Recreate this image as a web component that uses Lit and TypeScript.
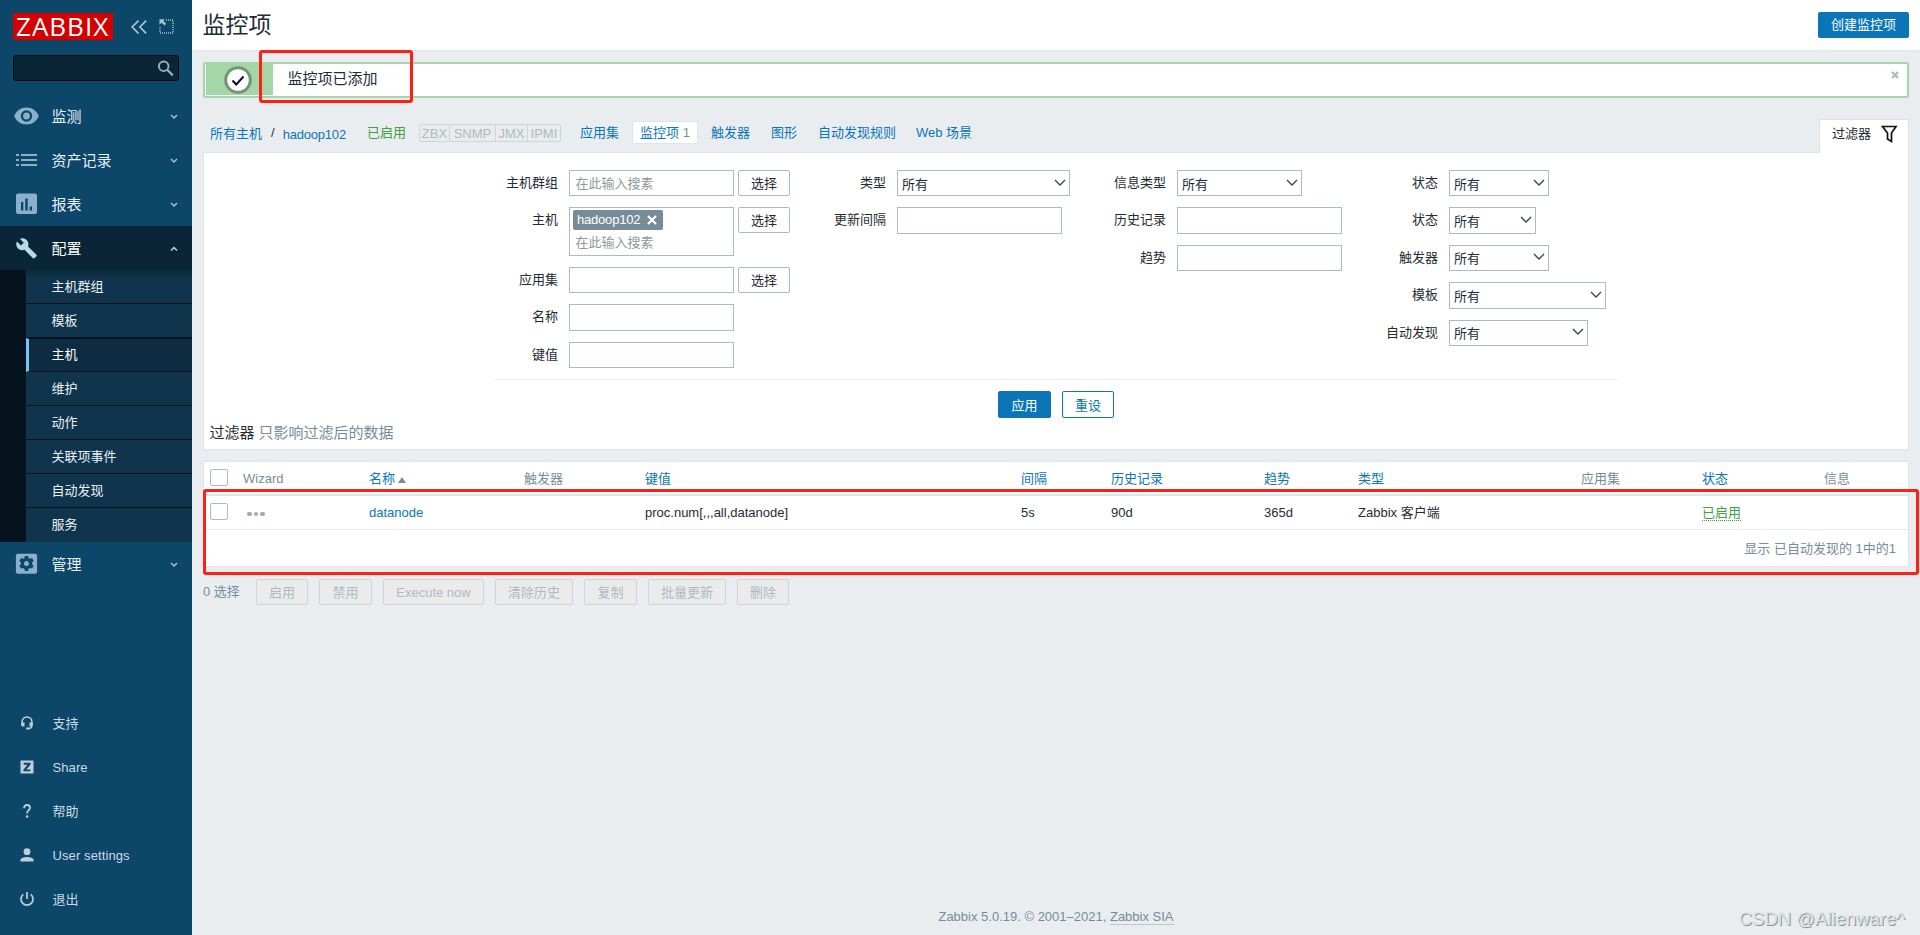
import { LitElement, html, css, svg, nothing } from "lit";
import { customElement } from "lit/decorators.js";
import { classMap } from "lit/directives/class-map.js";

const icons: Record<string, unknown> = {
  eye: svg`<svg width="26" height="20" viewBox="0 0 26 20"><path fill-rule="evenodd" d="M13.500 1.500C8 1.500 3.300 4.800 1.100 10c2.200 5.200 6.900 8.500 12.400 8.500S23.700 15.200 25.900 10C23.700 4.800 19 1.500 13.500 1.500zm0 14.200a5.700 5.700 0 1 1 0-11.400 5.700 5.700 0 0 1 0 11.400zm0-9.100a3.400 3.400 0 1 0 0 6.800 3.400 3.400 0 0 0 0-6.800z" fill="currentColor"/></svg>`,
  list: svg`<svg width="26" height="20" viewBox="0 0 26 20"><path d="M3 3h3v2H3zM3 8h3v2H3zM3 13h3v2H3zM8 3h16v2H8zM8 8h16v2H8zM8 13h16v2H8z" transform="translate(0 1)" fill="currentColor"/></svg>`,
  chart: svg`<svg width="26" height="24" viewBox="0 0 26 24"><path fill-rule="evenodd" d="M5.100 1.500h16.800c1.200 0 2.100.9 2.100 2.100v16.300c0 1.200-.9 2.100-2.100 2.100H5.100A2.100 2.100 0 0 1 3 19.900V3.600c0-1.200.9-2.100 2.100-2.100zM8 10v8.500h2.300V10zm4.300-3.500v12h2.400v-12zm4.400 8v4H19v-4z" fill="currentColor"/></svg>`,
  wrench: svg`<svg width="26" height="24" viewBox="0 0 26 24"><path d="M22.700 19l-9.100-9.100c.9-2.300.4-5-1.500-6.900-2-2-5-2.400-7.400-1.300L9 6 6 9 1.600 4.700C.4 7.100.9 10.100 2.900 12.100c1.900 1.900 4.600 2.400 6.900 1.500l9.100 9.100c.4.400 1 .4 1.400 0l2.300-2.300c.5-.4.5-1.100.1-1.400z" transform="translate(2.400 1.200) scale(.93)" fill="currentColor"/></svg>`,
  gear: svg`<svg width="26" height="24" viewBox="0 0 26 24"><path fill-rule="evenodd" transform="translate(.4 0)" d="M4.500 1.800h17.200c1.100 0 2 .9 2 2v16c0 1.100-.9 2-2 2H4.500a2 2 0 0 1-2-2v-16c0-1.100.9-2 2-2zM11.400 4l-.4 2-1.300.8-2.100-.7-1.700 2.900 1.600 1.500v1.700l-1.600 1.500 1.700 2.900 2.100-.7 1.300.8.400 2.300h3.400l.4-2.300 1.300-.8 2.100.7 1.700-2.900-1.600-1.500v-1.700l1.600-1.500-1.700-2.900-2.100.7-1.300-.8-.4-2zM13.100 8.900a2.500 2.500 0 1 1 0 5 2.500 2.500 0 0 1 0-5z" fill="currentColor"/></svg>`,
  support: svg`<svg width="14" height="14" viewBox="0 0 14 14"><path d="M2.100 9V5.800a4.900 4.900 0 0 1 9.800 0V9c0 2-.7 3.200-2.500 3.400H7.500" fill="none" stroke="currentColor" stroke-width="1.500"/><path d="M1.300 6.500h3.200v4H2.600c-.8 0-1.300-.5-1.300-1.200zM9.500 6.500h3.200v2.800c0 .7-.5 1.200-1.300 1.200H9.500zM6.200 11.500h2.600v2H6.200z" fill="currentColor"/></svg>`,
  share: svg`<svg width="14" height="14" viewBox="0 0 14 14"><path fill-rule="evenodd" d="M1 .5h12q.5 0 .5.5v12q0 .5-.5.500H1q-.5 0-.5-.5V1Q.5.500 1 .5zM3.700 2.800v1.900h3.800L3.400 9.700v1.600h7v-1.900H6.500l4-5V2.800z" fill="currentColor"/></svg>`,
  help: svg`<svg width="14" height="14" viewBox="0 0 14 14"><path d="M4 4.200C4 2.100 5.200 1 7 1s3 1 3 2.700c0 2.200-2.800 2.600-2.800 5.100v.6" fill="none" stroke="currentColor" stroke-width="1.800"/><circle cx="7.100" cy="12.500" r="1.300" fill="currentColor"/></svg>`,
  user: svg`<svg width="14" height="14" viewBox="0 0 14 14"><circle cx="7" cy="3.700" r="3.400" fill="currentColor"/><path d="M.4 13.500v-1.600C.4 9.900 4 8.900 7 8.900s6.600 1 6.600 3v1.600z" fill="currentColor"/></svg>`,
  power: svg`<svg width="14" height="14" viewBox="0 0 14 14"><path d="M3.300 2.400a6 6 0 1 0 7.400 0M7 0v7" fill="none" stroke="currentColor" stroke-width="1.700"/></svg>`,
};

const chevron = (up = false) => svg`<svg class="chev" width="8" height="6" viewBox="0 0 8 6"><path d=${up ? "M1 4.500l3-3 3 3" : "M1 1l3 3 3-3"} fill="none" stroke="currentColor" stroke-width="1.500"/></svg>`;

@customElement("zbx-sidebar")
class ZbxSidebar extends LitElement {
  static styles = css`
    :host { display: flex; flex-direction: column; width: 192px; height: 100%; background: #0c4669; color: #e8f1f7;
      font: 15px/44px "Liberation Sans", "Noto Sans CJK SC", sans-serif; box-sizing: border-box; padding-bottom: 14px; }
    .head { display: flex; height: 55px; padding: 13px 0 0 13px; box-sizing: border-box; align-items: flex-start; color: #a9c3d3; }
    .logo { box-sizing: border-box; flex: none; width: 100px; height: 27px; margin-right: 18px; padding-left: 3px; background: #d40000; color: #fff; font: 26px/27px "Open Sans", sans-serif; letter-spacing: 1px; white-space: nowrap; }
    .fold { margin: 7px 12px 0 0; }
    .compact { margin-top: 6px; }
    .search { display: flex; align-items: center; justify-content: flex-end; box-sizing: border-box; width: 166px; height: 26px; margin: 0 0 13px 13px;
      background: #0a2536; border: 1px solid #020b11; border-radius: 3px; padding-right: 4px; color: #8fb1c8; }
    .item { display: flex; align-items: center; height: 44px; padding: 0 14px 0 13px; }
    .item svg { color: #8ab0ca; flex: none; }
    .item .label { flex: 1; margin-left: 12.500px; padding-top: 2px; }
    .item .chev { color: #a5c4d8; margin-top: 2px; }
    .item.open { background: #0a2536; color: #fff; }
    .item.open svg { color: #b9d8ec; }
    .sub { background: #04131d; padding-left: 26px; font-size: 13px; }
    .sub div { box-sizing: border-box; height: 34px; line-height: 33px; padding-left: 25.500px; background: #0f344b; border-bottom: 1px solid #04131d; }
    .sub .sel { background: #0d2b41; border-left: 3px solid #7cc4f5; border-top: 1px solid #04131d; padding-left: 22.500px; line-height: 31px; color: #fff; }
    .sub div:last-child { border-bottom: 0; }
    .sub div:first-child { background: linear-gradient(#0b2a3d, #0f344b 8px); }
    .grow { flex: 1; }
    .small { font-size: 13px; display: flex; align-items: center; height: 44px; padding-left: 19.500px; color: #cbdbe5; }
    .small span { margin-left: 19px; padding-top: 2px; letter-spacing: .1px; }
    .small svg { color: #bccfd9; }
  `;
  render() {
    const main: [string, string][] = [["eye", "监测"], ["list", "资产记录"], ["chart", "报表"], ["wrench", "配置"]];
    const sub = ["主机群组", "模板", "主机", "维护", "动作", "关联项事件", "自动发现", "服务"];
    const bottom: [string, string][] = [["support", "支持"], ["share", "Share"], ["help", "帮助"], ["user", "User settings"], ["power", "退出"]];
    return html`
      <div class="head">
        <div class="logo">ZABBIX</div>
        <svg class="fold" width="16" height="14" viewBox="0 0 16 14"><path d="M7.500.7L1.200 7l6.300 6.300M15.200.7L8.900 7l6.300 6.300" fill="none" stroke="currentColor" stroke-width="1.700"/></svg>
        <svg class="compact" width="15" height="15" viewBox="0 0 15 15"><path d="M7 1h7v13H1V8" fill="none" stroke="currentColor" stroke-width="1.400" stroke-dasharray="1 1"/><path d="M.5.300h5.500L4.400 2l2.800 2.800-1.700 1.700L2.600 3.800.5 5.800z" fill="currentColor"/></svg>
      </div>
      <div class="search"><svg width="17" height="17" viewBox="0 0 17 17"><circle cx="6.700" cy="6.300" r="4.800" fill="none" stroke="currentColor" stroke-width="1.900"/><path d="M10.200 9.800l5.600 5.600" stroke="currentColor" stroke-width="2.200"/></svg></div>
      ${main.map(([i, t]) => html`<div class=${classMap({ item: true, open: i === "wrench" })}>${icons[i]}<span class="label">${t}</span>${chevron(i === "wrench")}</div>`)}
      <div class="sub">${sub.map((t) => html`<div class=${classMap({ sel: t === "主机" })}>${t}</div>`)}</div>
      <div class="item">${icons.gear}<span class="label">管理</span>${chevron()}</div>
      <div class="grow"></div>
      ${bottom.map(([i, t]) => html`<div class="small">${icons[i]}<span>${t}</span></div>`)}`;
  }
}

type Field = { label: string; kind: "select" | "input" | "picker" | "multi" | "inputpick"; width?: number };

@customElement("zbx-filter")
class ZbxFilter extends LitElement {
  static styles = css`
    :host { display: block; box-sizing: border-box; height: 298px; background: #fff; border: 1px solid #dfe4e7; padding: 17px 0 0; font-size: 13px; color: #1f2c33; }
    .cols { display: flex; width: 1122px; height: 209px; margin-left: 291px; border-bottom: 1px solid #e7eaec; align-items: flex-start; }
    .col { display: flex; flex-direction: column; gap: 11px; }
    .row { display: flex; height: 26.400px; line-height: 26px; }
    .row.tall { height: 48.330px; }
    .lab { text-align: right; margin-right: 11px; white-space: nowrap; }
    .c0 .lab { width: 63px; } .c1 .lab { width: 96px; } .c2 .lab { width: 96px; } .c3 .lab { width: 96px; }
    .c0 { width: 295px; } .c1 { width: 280px; } .c2 { width: 272px; }
    .box { box-sizing: border-box; height: 100%; width: 165px; border: 1px solid #acbbc2; background: #fff; padding-left: 5.500px; line-height: 25px; color: #8f989d; }
    .select { display: flex; align-items: center; justify-content: space-between; color: #1f2c33; padding: 2px 3.500px 0 4px; }
    .select svg { margin-top: -3px; }
    .btn { box-sizing: border-box; width: 52px; height: 26px; line-height: 25px; margin-left: 4px; border: 1px solid #acbbc2; border-radius: 2px; text-align: center; }
    .chip { display: flex; align-items: center; width: 90px; height: 20px; box-sizing: border-box; margin: 2px 0 0 -2.500px; padding: 0 6px 0 4px; justify-content: space-between; background: #768d99; color: #fff; border-radius: 2px; line-height: 20px; letter-spacing: -.2px; }
    .actions { display: flex; gap: 11px; justify-content: center; margin: 11px 0 0 0; }
    .act { box-sizing: border-box; width: 53px; height: 27px; line-height: 27px; border: 1px solid #0a76b8; border-radius: 2px; color: #0a76b8; text-align: center; }
    .act + .act { width: 52px; }
    .act.main { background: #0a76b8; color: #fff; }
    .note { display: flex; gap: 4px; font-size: 15px; line-height: 20px; margin: 5px 0 0 5.500px; color: #768d99; }
    .note b { font-weight: 400; color: #1f2c33; }
  `;
  field(f: Field) {
    const pick = f.kind === "picker" || f.kind === "multi" || f.kind === "inputpick";
    const body = f.kind === "select"
      ? html`<div class="box select" style="width:${f.width}px">所有<svg width="12" height="8" viewBox="0 0 12 8"><path d="M1 1l5 5 5-5" fill="none" stroke="#3c474d" stroke-width="1.400"/></svg></div>`
      : html`<div class="box">${f.kind === "multi" ? html`<div class="chip">hadoop102<svg width="10" height="10" viewBox="0 0 10 10"><path d="M1 1l8 8M9 1L1 9" stroke="#fff" stroke-width="2.200"/></svg></div>` : nothing}${f.kind === "picker" || f.kind === "multi" ? "在此输入搜素" : nothing}</div>`;
    return html`<div class=${classMap({ row: true, tall: f.kind === "multi" })}><span class="lab">${f.label}</span>${body}${pick ? html`<span class="btn">选择</span>` : nothing}</div>`;
  }
  render() {
    const cols: Field[][] = [
      [{ label: "主机群组", kind: "picker" }, { label: "主机", kind: "multi" }, { label: "应用集", kind: "inputpick" }, { label: "名称", kind: "input" }, { label: "键值", kind: "input" }],
      [{ label: "类型", kind: "select", width: 173 }, { label: "更新间隔", kind: "input" }],
      [{ label: "信息类型", kind: "select", width: 125 }, { label: "历史记录", kind: "input" }, { label: "趋势", kind: "input" }],
      [{ label: "状态", kind: "select", width: 100 }, { label: "状态", kind: "select", width: 87 }, { label: "触发器", kind: "select", width: 100 }, { label: "模板", kind: "select", width: 157 }, { label: "自动发现", kind: "select", width: 139 }],
    ];
    return html`<div class="cols">${cols.map((c, i) => html`<div class="col c${i}">${c.map((f) => this.field(f))}</div>`)}</div>
      <div class="actions"><span class="act main">应用</span><span class="act">重设</span></div>
      <div class="note"><b>过滤器</b><span>只影响过滤后的数据</span></div>`;
  }
}

@customElement("zbx-items")
class ZbxItems extends LitElement {
  static styles = css`
    :host { display: block; box-sizing: border-box; height: 106px; margin-top: 11px; background: #fff; border: 1px solid #dfe4e7; font-size: 13px; color: #1f2c33; }
    .row { display: grid; align-items: center; padding-left: 6px; white-space: nowrap;
      grid-template-columns: 33px 126px 155px 121px 376px 90px 153px 94px 223px 121px 122px 1fr; height: 33px; border-bottom: 1px solid #e7eaec; }
    .row.head { height: 32px; border-bottom: 2px solid #dfe4e7; color: #768d99; }
    .head span:not(.box) { padding-top: 2px; }
    .link { color: #0a76b8; }
    .box { box-sizing: border-box; width: 18px; height: 17px; border: 1px solid #acbbc2; border-radius: 2px; margin-top: -2px; }
    .head .box { margin-top: -1px; }
    .on { color: #429e47; border-bottom: 1px dotted #429e47; line-height: 16px; }
    .dots { display: flex; gap: 2px; margin: 3px 0 0 4px; }
    .dots i { width: 4.500px; height: 4.500px; border-radius: 50%; background: #9aaab3; }
    .asc { display: inline-block; margin-left: 3px; border: 4.500px solid transparent; border-top: 0; border-bottom: 6.500px solid #768d99; }
    .total { height: 36px; line-height: 37px; text-align: right; padding-right: 12px; color: #768d99; }
  `;
  render() {
    const cols: [string, boolean][] = [["Wizard", false], ["名称", true], ["触发器", false], ["键值", true], ["间隔", true], ["历史记录", true], ["趋势", true], ["类型", true], ["应用集", false], ["状态", true], ["信息", false]];
    return html`
      <div class="row head"><span class="box"></span>${cols.map(([t, l]) => html`<span class=${l ? "link" : ""}>${t}${t === "名称" ? html`<i class="asc"></i>` : nothing}</span>`)}</div>
      <div class="row"><span class="box"></span><span class="dots"><i></i><i></i><i></i></span><span class="link">datanode</span><span></span>
        <span>proc.num[,,,all,datanode]</span><span>5s</span><span>90d</span><span>365d</span><span>Zabbix 客户端</span><span></span><span><span class="on">已启用</span></span><span></span></div>
      <div class="total">显示 已自动发现的 1中的1</div>`;
  }
}

@customElement("app-root")
class AppRoot extends LitElement {
  static styles = css`
    :host { display: grid; grid-template-columns: 192px 1fr; height: 935px; overflow: hidden; position: relative; background: #e9edf0; color: #1f2c33;
      font: 13px/20px "Liberation Sans", "Noto Sans CJK SC", sans-serif; }
    .main { display: flex; flex-direction: column; min-width: 0; }
    .title { display: flex; justify-content: space-between; align-items: center; box-sizing: border-box; height: 51px; padding: 0 11px; background: #fff; border-bottom: 1px solid #dfe4e7; }
    .title h1 { margin: 0 0 0 -.5px; font-size: 23px; font-weight: 400; line-height: 50px; }
    .create { width: 91px; height: 26px; line-height: 26px; background: #0a76b8; color: #fff; border-radius: 2px; text-align: center; }
    .body { display: flex; flex-direction: column; flex: 1; padding: 11px 11px 0; }
    .msg { display: flex; box-sizing: border-box; height: 36px; border: 2px solid #a5d6a7; border-radius: 2px; background: #fff; font-size: 15px; line-height: 30px; }
    .mark { display: flex; align-items: center; justify-content: center; width: 67px; margin: 0 14.500px 1px 1px; background: #a5d6a7; }
    .mark svg { margin-right: 4px; }
    .msg .x { margin: 7px 8px 0 auto; }
    .nav { display: flex; align-items: center; height: 54px; box-sizing: border-box; padding: 16px 0 0 7px; line-height: 20px; white-space: nowrap; color: #0a76b8; }
    .nav .sep { color: #1f2c33; margin: 0 8px 0 9px; }
    .nav .host { letter-spacing: -.2px; margin-right: 21px; padding-top: 3px; }
    .nav .all { padding-top: 2px; }
    .nav .on { color: #429e47; margin-right: 13px; }
    .if { display: flex; box-sizing: border-box; width: 142px; height: 18px; border: 1px solid #ccd5d9; border-radius: 2px; background: #ebebeb; color: #acbbc2; line-height: 17px; text-align: center; margin-right: 19px; }
    .if span + span { border-left: 1px solid #ccd5d9; }
    .if .a { width: 29px; } .if .b { width: 45px; } .if .c { width: 31px; } .if .d { width: 32px; }
    .tab { margin-right: 21px; margin-top: -1px; }
    .tab.app { margin-right: 13px; }
    .tab.cur { box-sizing: border-box; width: 66px; height: 23px; line-height: 22px; text-align: center; background: #fff; border: 1px solid #dfe4e7; border-radius: 2px; margin-right: 13px; white-space: pre; margin-top: -2px; }
    .tab.cur i { font-style: normal; color: #768d99; }
    .tab.rule { margin-right: 20px; }
    .toggle { display: flex; align-items: center; justify-content: space-between; box-sizing: border-box; width: 90px; height: 34px; padding: 0 10px 5px 12px; margin: 5px 0 0 auto;
      position: relative; z-index: 1; background: #fff; border: 1px solid #dfe4e7; border-bottom: 0; border-radius: 2px 2px 0 0; color: #1f2c33; }
    .bulk { display: flex; align-items: center; gap: 11px; height: 27px; margin-top: 11px; color: #768d99; white-space: nowrap; }
    .bulk .cnt { width: 42px; }
    .bulk .b { box-sizing: border-box; height: 26px; line-height: 25px; text-align: center; border: 1px solid #ccd5d9; border-radius: 2px; background: #ebebeb; color: #acbbc2; }
    .foot { margin: auto 0 8px; text-align: center; color: #768d99; font-size: 13px; }
    .foot span { border-bottom: 1px solid #bcc8ce; }
    .ring { position: absolute; box-sizing: border-box; border: 3px solid #ff2015; border-radius: 3px; z-index: 3; }
    .r1 { left: 259px; top: 50px; width: 154px; height: 53px; }
    .r2 { left: 203px; top: 489px; width: 1716px; height: 86px; }
    .wm { position: absolute; right: 15px; bottom: 4px; font-size: 18.500px; line-height: 24px; color: #dfe2e4; text-shadow: 1px 1px 0 #8f9294; }
  `;
  render() {
    const bulk: [string, number][] = [["启用", 52], ["禁用", 53], ["Execute now", 101], ["清除历史", 78], ["复制", 53], ["批量更新", 78], ["删除", 52]];
    return html`
      <zbx-sidebar></zbx-sidebar>
      <div class="main">
        <div class="title"><h1>监控项</h1><span class="create">创建监控项</span></div>
        <div class="body">
          <div class="msg">
            <div class="mark"><svg width="28" height="28" viewBox="0 0 28 28"><circle cx="14" cy="14" r="12.300" fill="#fff" stroke="#729574" stroke-width="3"/><path d="M8.500 14.500l3.800 4 7.200-8" fill="none" stroke="#111" stroke-width="2"/></svg></div>
            <span>监控项已添加</span>
            <svg class="x" width="8" height="8" viewBox="0 0 8 8"><path d="M1 1l6 6M7 1L1 7" stroke="#acbbc2" stroke-width="2.400"/></svg>
          </div>
          <div class="nav">
            <span class="all">所有主机</span><span class="sep">/</span><span class="host">hadoop102</span><span class="on">已启用</span>
            <span class="if"><span class="a">ZBX</span><span class="b">SNMP</span><span class="c">JMX</span><span class="d">IPMI</span></span>
            <span class="tab app">应用集</span><span class="tab cur">监控项<i> 1</i></span><span class="tab">触发器</span><span class="tab">图形</span><span class="tab rule">自动发现规则</span><span class="tab">Web 场景</span>
            <span class="toggle">过滤器<svg width="17" height="18" viewBox="0 0 17 18"><path d="M1.500 1.500h13.500L10.500 8v8.500L6.500 14V8z" fill="none" stroke="#111" stroke-width="1.700"/></svg></span>
          </div>
          <zbx-filter></zbx-filter>
          <zbx-items></zbx-items>
          <div class="bulk"><span class="cnt">0 选择</span>${bulk.map(([t, w]) => html`<span class="b" style="width:${w}px">${t}</span>`)}</div>
          <div class="foot">Zabbix 5.0.19. © 2001–2021, <span>Zabbix SIA</span></div>
        </div>
      </div>
      <div class="ring r1"></div><div class="ring r2"></div>
      <div class="wm">CSDN @Alienware^</div>`;
  }
}
